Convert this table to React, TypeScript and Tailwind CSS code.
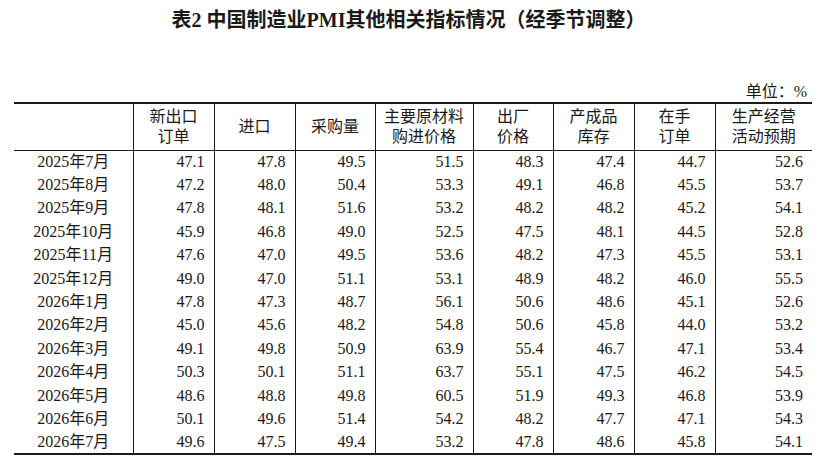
const cols = ['新出口|订单', '进口', '采购量', '主要原材料|购进价格', '出厂|价格', '产成品|库存', '在手|订单', '生产经营|活动预期']
const widths = ['w-[119px]', 'w-[81px]', 'w-[81px]', 'w-[80px]', 'w-[98px]', 'w-[80px]', 'w-[81px]', 'w-[81px]', 'w-[97px]']

const rows: [string, number[]][] = [
  ['2025年7月', [47.1, 47.8, 49.5, 51.5, 48.3, 47.4, 44.7, 52.6]],
  ['2025年8月', [47.2, 48.0, 50.4, 53.3, 49.1, 46.8, 45.5, 53.7]],
  ['2025年9月', [47.8, 48.1, 51.6, 53.2, 48.2, 48.2, 45.2, 54.1]],
  ['2025年10月', [45.9, 46.8, 49.0, 52.5, 47.5, 48.1, 44.5, 52.8]],
  ['2025年11月', [47.6, 47.0, 49.5, 53.6, 48.2, 47.3, 45.5, 53.1]],
  ['2025年12月', [49.0, 47.0, 51.1, 53.1, 48.9, 48.2, 46.0, 55.5]],
  ['2026年1月', [47.8, 47.3, 48.7, 56.1, 50.6, 48.6, 45.1, 52.6]],
  ['2026年2月', [45.0, 45.6, 48.2, 54.8, 50.6, 45.8, 44.0, 53.2]],
  ['2026年3月', [49.1, 49.8, 50.9, 63.9, 55.4, 46.7, 47.1, 53.4]],
  ['2026年4月', [50.3, 50.1, 51.1, 63.7, 55.1, 47.5, 46.2, 54.5]],
  ['2026年5月', [48.6, 48.8, 49.8, 60.5, 51.9, 49.3, 46.8, 53.9]],
  ['2026年6月', [50.1, 49.6, 51.4, 54.2, 48.2, 47.7, 47.1, 54.3]],
  ['2026年7月', [49.6, 47.5, 49.4, 53.2, 47.8, 48.6, 45.8, 54.1]],
]

export default function App() {
  return (
    <div className="w-[831px] h-[470px] bg-white text-[#1a1a1a] font-['Liberation_Serif','Noto_Sans_CJK_SC',serif]">
      {/* Title */}
      <div className="pt-[6px] h-[28px] leading-[28px] text-[20px] font-bold text-center pr-[14px]">
        表2 中国制造业PMI其他相关指标情况（经季节调整）
      </div>

      {/* Unit */}
      <div className="mt-[54px] pr-[24px] text-right text-[16px] leading-[20px]">单位：%</div>

      <div className="px-[14px]">
        <table className="table-fixed border-collapse w-[798px] text-[16px]">
          <colgroup>
            {widths.map((w, i) => (
              <col key={i} className={w} />
            ))}
          </colgroup>
          <thead>
            <tr className="h-[47px] border-t-2 border-b border-[#1a1a1a]">
              <th className="font-normal" />
              {cols.map((c, i) => (
                <th key={i} className="font-normal border-l border-[#1a1a1a] leading-[20px] text-center align-middle">
                  {c.split('|').map((line, j) => (
                    <div key={j}>{line}</div>
                  ))}
                </th>
              ))}
            </tr>
          </thead>
          <tbody className="border-b-2 border-[#1a1a1a]">
            {rows.map(([label, vals]) => (
              <tr key={label} className="h-[23.4px] leading-[20px]">
                <td className="text-center p-0">{label}</td>
                {vals.map((v, i) => (
                  <td key={i} className="border-l border-[#1a1a1a] text-right pr-[9px] py-0">
                    {v.toFixed(1)}
                  </td>
                ))}
              </tr>
            ))}
          </tbody>
        </table>
      </div>
    </div>
  )
}
